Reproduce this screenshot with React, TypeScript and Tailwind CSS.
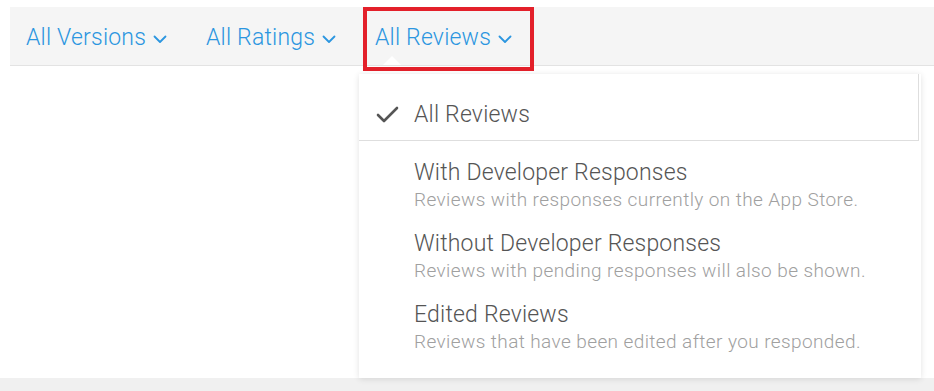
import React from "react";

const Chevron: React.FC = () => (
  <svg width="14" height="9" viewBox="0 0 14 9" className="ml-[7px] mt-[3px]">
    <polyline
      points="1.5,1.5 7,7 12.5,1.5"
      fill="none"
      stroke="#2b96e0"
      strokeWidth="1.8"
      strokeLinecap="round"
      strokeLinejoin="round"
    />
  </svg>
);

const tabs = [
  { label: "All Versions", w: "w-[180px]" },
  { label: "All Ratings", w: "w-[169px]" },
  { label: "All Reviews", w: "w-auto" },
];

const options = [
  {
    title: "With Developer Responses",
    sub: "Reviews with responses currently on the App Store.",
  },
  {
    title: "Without Developer Responses",
    sub: "Reviews with pending responses will also be shown.",
  },
  {
    title: "Edited Reviews",
    sub: "Reviews that have been edited after you responded.",
  },
];

const App: React.FC = () => {
  return (
    <div
      className="relative w-[934px] h-[391px] overflow-hidden bg-white"
      style={{ fontFamily: "Roboto, 'Liberation Sans', sans-serif" }}
    >
      <div className="h-[7px]" />
      <div className="ml-[10px] h-[59px] bg-[#f5f5f5] border-b border-[#e3e3e3] flex items-center pl-[16px] pt-[3px]">
        {tabs.map((t) => (
          <div key={t.label} className={`flex items-center ${t.w}`}>
            <span className="text-[23px] tracking-[0.2px] font-light text-[#2b96e0] leading-none">
              {t.label}
            </span>
            <Chevron />
          </div>
        ))}
      </div>
      <div className="h-[312px]" />
      <div className="h-[13px] bg-[#f0f0f0]" />

      {/* red highlight */}
      <div className="absolute left-[363px] top-[7px] w-[171px] h-[64px] border-[4px] border-[#e3202a]" />

      {/* caret */}
      <div className="absolute left-[383px] top-[56px] w-0 h-0 border-l-[9px] border-r-[9px] border-b-[9px] border-l-transparent border-r-transparent border-b-white" />

      {/* dropdown */}
      <div className="absolute left-[359px] top-[74px] w-[562px] h-[304px] bg-white shadow-[0_1px_6px_rgba(0,0,0,0.12)]">
        <div className="h-[67px] pt-[16px] flex items-center border-b border-r border-[#dedede] mr-[2px]">
          <svg width="24" height="18" viewBox="0 0 24 18" className="ml-[17px]">
            <polyline
              points="2,9 8,15 21,2"
              fill="none"
              stroke="#555"
              strokeWidth="2.6"
              strokeLinecap="round"
              strokeLinejoin="round"
            />
          </svg>
          <span className="ml-[14px] text-[23px] tracking-[0.2px] font-light text-[#555]">
            All Reviews
          </span>
        </div>
        <div className="pt-[19px] pl-[55px]">
          {options.map((o) => (
            <div key={o.title} className="mb-[18px]">
              <div className="text-[23px] tracking-[0.2px] font-light text-[#555] leading-[26px]">
                {o.title}
              </div>
              <div className="text-[19px] tracking-[0.4px] font-light text-[#a0a0a0] leading-[27px]">
                {o.sub}
              </div>
            </div>
          ))}
        </div>
      </div>
    </div>
  );
};

export default App;
